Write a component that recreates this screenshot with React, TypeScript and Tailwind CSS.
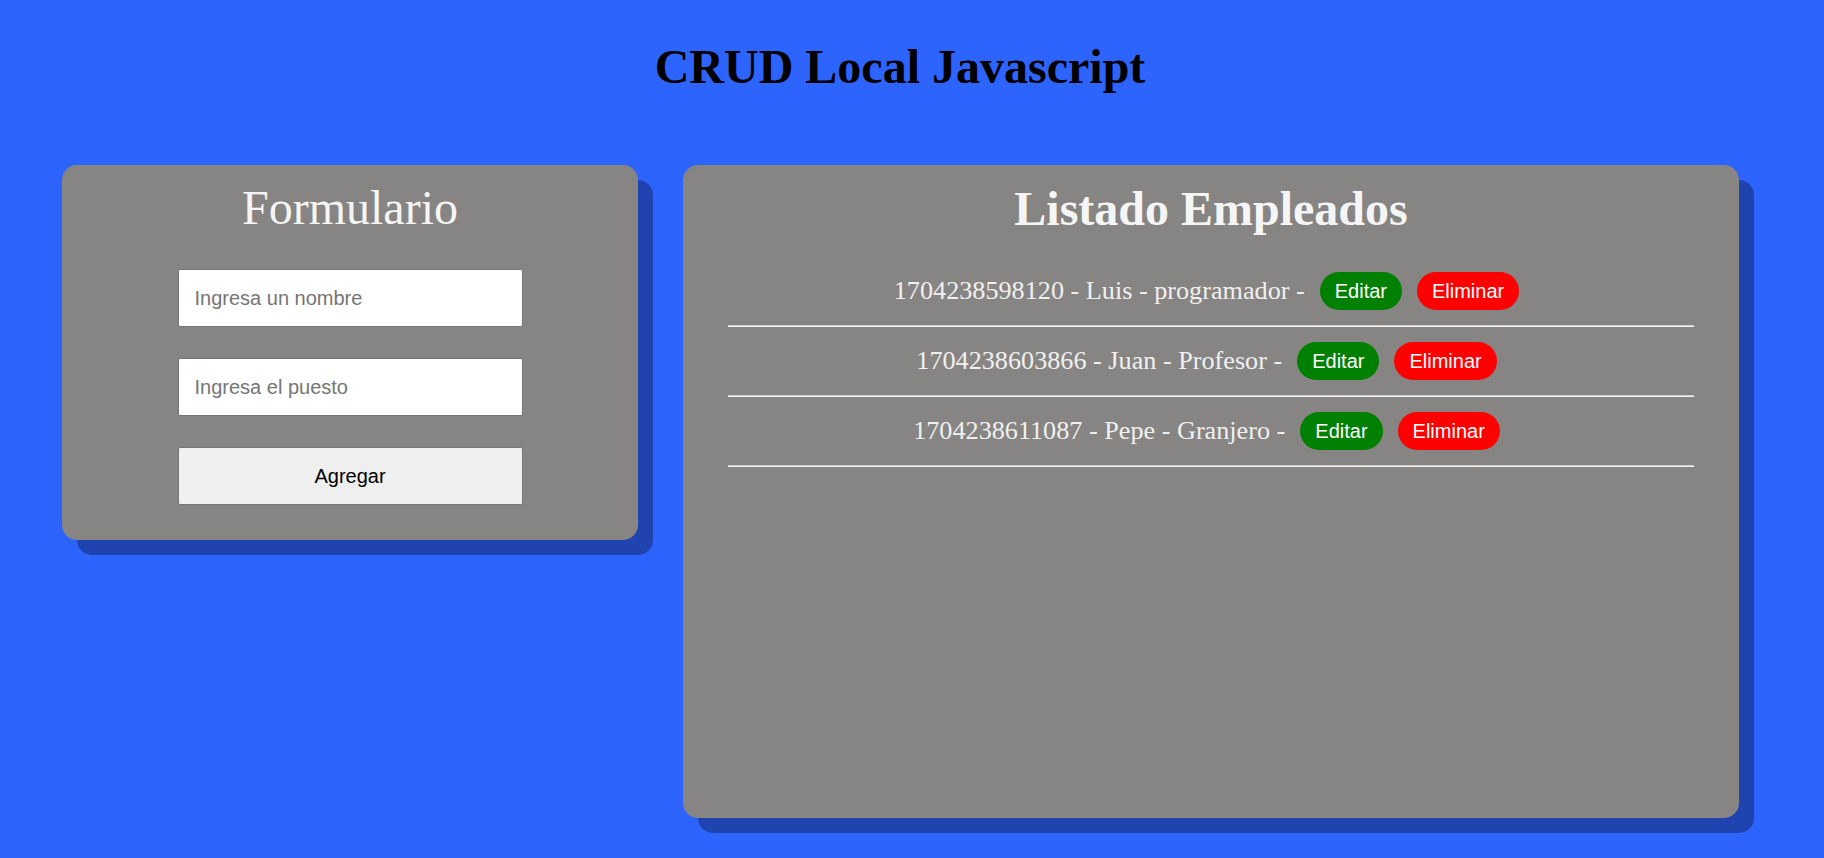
import React from "react";

const empleados = [
  { id: "1704238598120", nombre: "Luis", puesto: "programador" },
  { id: "1704238603866", nombre: "Juan", puesto: "Profesor" },
  { id: "1704238611087", nombre: "Pepe", puesto: "Granjero" },
];

export default function App() {
  return (
    <div className="min-h-[858px] w-full bg-[#2e64fe] font-['Liberation_Serif',serif]">
      <div className="w-[1800px]">
        <h1 className="pt-[40px] text-center text-[48px] font-bold leading-[54px] text-black">
          CRUD Local Javascript
        </h1>
        <div className="mt-[71px] flex items-start gap-[45px] pl-[62px]">
          {/* Formulario */}
          <div className="flex w-[576px] flex-col items-center rounded-[15px] bg-[#878583] pt-[16px] pb-[35px] shadow-[15px_15px_0_0_#1f44b0]">
            <h2 className="text-[48px] font-normal leading-[54px] text-[#f5f5f5]">Formulario</h2>
            <div className="mt-[34px] flex w-[345px] flex-col gap-[31px] font-['Liberation_Sans',Arial,sans-serif]">
              <input
                type="text"
                placeholder="Ingresa un nombre"
                className="h-[58px] w-full rounded-[2px] border border-[#767676] bg-white px-[16px] text-[20px] text-black placeholder:text-[#757575] outline-none"
              />
              <input
                type="text"
                placeholder="Ingresa el puesto"
                className="h-[58px] w-full rounded-[2px] border border-[#767676] bg-white px-[16px] text-[20px] text-black placeholder:text-[#757575] outline-none"
              />
              <button className="h-[58px] w-full rounded-[2px] border border-[#767676] bg-[#efefef] text-[20px] text-black">
                Agregar
              </button>
            </div>
          </div>

          {/* Listado */}
          <div className="flex h-[653px] w-[1056px] flex-col rounded-[15px] bg-[#878583] px-[45px] pt-[17px] shadow-[15px_15px_0_0_#1f44b0]">
            <h2 className="text-center text-[48px] font-bold leading-[54px] text-[#f5f5f5]">Listado Empleados</h2>
            <div className="mt-[21px] flex flex-col">
              {empleados.map((e) => (
                <div key={e.id} className="flex flex-col">
                  <div className="flex items-center justify-center gap-[15px] py-[15px] pr-[9px]">
                    <span className="text-[26.2px] leading-[30px] text-[#f0f0f0]">
                      {e.id} - {e.nombre} - {e.puesto} -
                    </span>
                    <button className="h-[38px] rounded-full bg-[#008000] px-[15px] font-['Liberation_Sans',Arial,sans-serif] text-[20px] text-white">
                      Editar
                    </button>
                    <button className="h-[38px] rounded-full bg-[#ff0000] px-[15px] font-['Liberation_Sans',Arial,sans-serif] text-[20px] text-white">
                      Eliminar
                    </button>
                  </div>
                  <div className="h-[2px] border-t border-b border-t-[#cfcfcf] border-b-[#f2f2f2]" />
                </div>
              ))}
            </div>
          </div>
        </div>
      </div>
    </div>
  );
}
